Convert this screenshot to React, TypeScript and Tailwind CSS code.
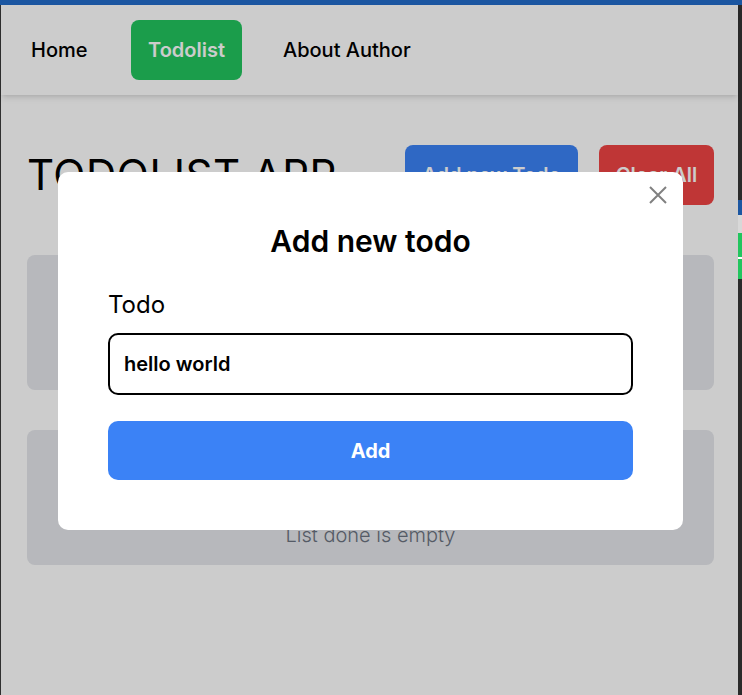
import React from "react";

const font = { fontFamily: "Inter, 'Open Sans', sans-serif" };

export default function App() {
  return (
    <div
      className="w-[742px] h-[695px] flex flex-col overflow-hidden bg-[#2b2b2b]"
      style={font}
    >
      <div className="h-[5px] bg-[#1b56a1] shrink-0" />
      <div className="flex flex-1 min-h-0">
        <div className="w-px bg-[#2f2f2f]" />
        <div className="relative flex-1 bg-white flex flex-col">
          {/* navbar */}
          <nav className="h-[90px] shrink-0 bg-white shadow-md flex items-center pl-[30px] text-[20px] font-medium text-black">
            <a className="w-[100px]">Home</a>
            <a className="w-[111px] h-[60px] flex items-center justify-center rounded-[8px] bg-[#22c55e] text-white font-semibold">
              Todolist
            </a>
            <a className="ml-[41px]">About Author</a>
          </nav>

          <main className="flex flex-col pl-[26px] pr-[24px] pt-[50px]">
            <div className="flex items-center justify-between h-[60px]">
              <h1 className="text-[42px] leading-none font-normal text-black tracking-[0.5px]">
                TODOLIST APP
              </h1>
              <div className="flex gap-[21px]">
                <button className="w-[173px] h-[60px] rounded-[8px] bg-[#3b82f6] text-white text-[20px] font-semibold">
                  Add new Todo
                </button>
                <button className="w-[115px] h-[60px] rounded-[8px] bg-[#ef4444] text-white text-[20px] font-semibold">
                  Clear All
                </button>
              </div>
            </div>

            <section className="mt-[50px] h-[135px] rounded-[8px] bg-[#e5e7eb] flex flex-col justify-end px-[20px] pb-[15px]">
              <p className="text-center text-[20px] leading-[30px] text-[#6b7280] font-light">
                List todo is empty
              </p>
            </section>

            <section className="mt-[40px] h-[135px] rounded-[8px] bg-[#e5e7eb] flex flex-col justify-end px-[20px] pb-[15px]">
              <p className="text-center text-[20px] leading-[30px] text-[#6b7280] font-light">
                List done is empty
              </p>
            </section>
          </main>

          {/* overlay */}
          <div className="absolute inset-0 bg-black/20 flex items-center justify-center">
            <div className="relative ml-[2px] mt-[2px] w-[625px] h-[358px] bg-white rounded-[10px] px-[50px] pt-[47px] flex flex-col">
              <button className="absolute right-[16px] top-[14px] w-[18px] h-[18px]">
                <svg viewBox="0 0 18 18" className="w-[18px] h-[18px]">
                  <path
                    d="M1 1 L17 17 M17 1 L1 17"
                    stroke="#808080"
                    strokeWidth="2"
                    fill="none"
                  />
                </svg>
              </button>
              <h3 className="text-center text-[30px] leading-[45px] font-semibold text-black">
                Add new todo
              </h3>
              <label className="mt-[23px] text-[24px] leading-[36px] text-black">
                Todo
              </label>
              <div className="mt-[10px] h-[62px] border-2 border-black rounded-[10px] flex items-center pl-[14px] text-[20px] font-semibold text-black">
                hello world
              </div>
              <button className="mt-[26px] h-[59px] rounded-[10px] bg-[#3b82f6] text-white text-[20px] font-bold">
                Add
              </button>
            </div>
          </div>
        </div>
        <div className="w-[4px] bg-[#2a2a2a] flex flex-col">
          <div className="h-[195px]" />
          <div className="h-[15px] bg-[#1b56a1]" />
          <div className="h-[18px] bg-[#d8d8d8]" />
          <div className="h-[24px] bg-[#22c55e]" />
          <div className="h-[2px] bg-white" />
          <div className="h-[20px] bg-[#22c55e]" />
        </div>
      </div>
    </div>
  );
}
